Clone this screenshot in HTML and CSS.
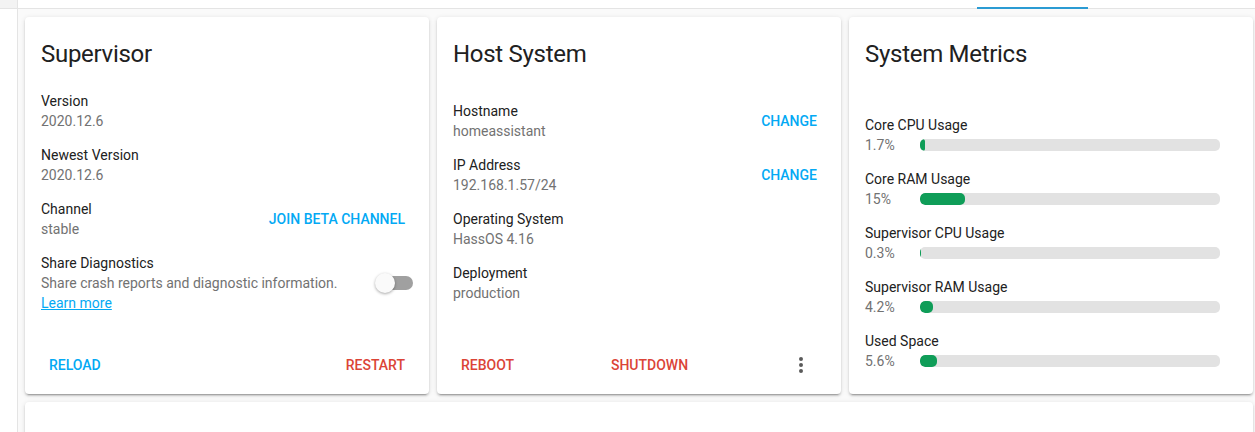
FILE: index.html
```html
<!DOCTYPE html>
<html lang="en">
<head>
    <meta charset="UTF-8">
    <meta name="viewport" content="width=device-width, initial-scale=1.0">
    <title>Supervisor - System</title>
    <link rel="stylesheet" href="styles.css">
</head>
<body>
    <div class="app">
        <aside class="sidebar">
            <div class="sidebar-top"></div>
        </aside>

        <main class="main">
            <div class="tabs">
                <span class="tab-active"></span>
            </div>

            <div class="grid">

                <div class="card">
                    <h1 class="card-header">Supervisor</h1>
                    <div class="card-content">
                        <div class="row">
                            <div>
                                <div class="label">Version</div>
                                <div class="value">2020.12.6</div>
                            </div>
                        </div>
                        <div class="row">
                            <div>
                                <div class="label">Newest Version</div>
                                <div class="value">2020.12.6</div>
                            </div>
                        </div>
                        <div class="row">
                            <div>
                                <div class="label">Channel</div>
                                <div class="value">stable</div>
                            </div>
                            <button class="btn">Join beta channel</button>
                        </div>
                        <div class="row">
                            <div>
                                <div class="label">Share Diagnostics</div>
                                <div class="value">Share crash reports and diagnostic information.</div>
                                <a class="link" href="#">Learn more</a>
                            </div>
                            <div class="switch"><span class="switch-thumb"></span></div>
                        </div>
                    </div>
                    <div class="card-actions">
                        <button class="btn">Reload</button>
                        <button class="btn warn">Restart</button>
                    </div>
                </div>

                <div class="card host">
                    <h1 class="card-header">Host System</h1>
                    <div class="card-content">
                        <div class="row">
                            <div>
                                <div class="label">Hostname</div>
                                <div class="value">homeassistant</div>
                            </div>
                            <button class="btn">Change</button>
                        </div>
                        <div class="row">
                            <div>
                                <div class="label">IP Address</div>
                                <div class="value">192.168.1.57/24</div>
                            </div>
                            <button class="btn">Change</button>
                        </div>
                        <div class="row">
                            <div>
                                <div class="label">Operating System</div>
                                <div class="value">HassOS 4.16</div>
                            </div>
                        </div>
                        <div class="row">
                            <div>
                                <div class="label">Deployment</div>
                                <div class="value">production</div>
                            </div>
                        </div>
                    </div>
                    <div class="card-actions">
                        <button class="btn warn">Reboot</button>
                        <button class="btn warn">Shutdown</button>
                        <button class="icon-btn">
                            <svg viewBox="0 0 24 24" width="24" height="24"><path d="M12,16A2,2 0 0,1 14,18A2,2 0 0,1 12,20A2,2 0 0,1 10,18A2,2 0 0,1 12,16M12,10A2,2 0 0,1 14,12A2,2 0 0,1 12,14A2,2 0 0,1 10,12A2,2 0 0,1 12,10M12,4A2,2 0 0,1 14,6A2,2 0 0,1 12,8A2,2 0 0,1 10,6A2,2 0 0,1 12,4Z"/></svg>
                        </button>
                    </div>
                </div>

                <div class="card metrics">
                    <h1 class="card-header">System Metrics</h1>
                    <div class="card-content">
                        <div class="metric">
                            <div class="label">Core CPU Usage</div>
                            <div class="metric-line">
                                <span class="value pct">1.7%</span>
                                <div class="bar"><div class="bar-fill" style="width:1.7%"></div></div>
                            </div>
                        </div>
                        <div class="metric">
                            <div class="label">Core RAM Usage</div>
                            <div class="metric-line">
                                <span class="value pct">15%</span>
                                <div class="bar"><div class="bar-fill" style="width:15%"></div></div>
                            </div>
                        </div>
                        <div class="metric">
                            <div class="label">Supervisor CPU Usage</div>
                            <div class="metric-line">
                                <span class="value pct">0.3%</span>
                                <div class="bar"><div class="bar-fill" style="width:0.3%"></div></div>
                            </div>
                        </div>
                        <div class="metric">
                            <div class="label">Supervisor RAM Usage</div>
                            <div class="metric-line">
                                <span class="value pct">4.2%</span>
                                <div class="bar"><div class="bar-fill" style="width:4.2%"></div></div>
                            </div>
                        </div>
                        <div class="metric">
                            <div class="label">Used Space</div>
                            <div class="metric-line">
                                <span class="value pct">5.6%</span>
                                <div class="bar"><div class="bar-fill" style="width:5.6%"></div></div>
                            </div>
                        </div>
                    </div>
                </div>

                <div class="card card-wide"></div>

            </div>
        </main>
    </div>
</body>
</html>
```

FILE: styles.css
```css
html, body{
    margin:0px;
    height:100%;
    overflow:hidden;
}
body{
    font-family: Roboto, "Noto Sans", sans-serif;
    font-size:14px;
    background-color:#fafafa;
    color:#212121;
}
.app{
    display:flex;
    height:100%;
}
.sidebar{
    width:17px;
    flex-shrink:0;
    background-color:#ffffff;
    border-right:1px solid #e4e4e4;
}
.sidebar-top{
    height:8px;
    background-color:#f3f3f3;
    border-bottom:1px solid #e4e4e4;
}
.main{
    flex:1;
    display:flex;
    flex-direction:column;
}
.tabs{
    height:8px;
    flex-shrink:0;
    background-color:#ffffff;
    border-bottom:1px solid #e4e4e4;
    display:flex;
    justify-content:flex-end;
    align-items:flex-end;
    padding-right:167px;
}
.tab-active{
    width:111px;
    height:2px;
    margin-bottom:-1px;
    background-color:#2b9bd3;
}
.grid{
    flex-shrink:0;
    display:grid;
    grid-template-columns: repeat(3, 404px);
    gap:8px;
    padding:8px 2px 0 7px;
}
.card{
    background-color:#ffffff;
    border-radius:4px;
    box-shadow: 0 2px 2px 0 rgba(0,0,0,.14), 0 1px 5px 0 rgba(0,0,0,.12), 0 3px 1px -2px rgba(0,0,0,.2);
    display:flex;
    flex-direction:column;
}
.card-wide{
    grid-column: 1 / 4;
    height:80px;
}
.card-header{
    margin:0px;
    padding:21px 16px 0;
    font-size:24px;
    font-weight:400;
    line-height:32px;
    letter-spacing:-0.012em;
    color:#212121;
}
.card-content{
    flex:1;
    padding:14px 16px 16px;
}
.host .card-content{
    padding-top:24px;
}
.metrics .card-content{
    padding-top:38px;
}
.row{
    display:flex;
    justify-content:space-between;
    align-items:center;
    padding:7px 0;
}
.label{
    line-height:20px;
    color:#212121;
}
.value{
    line-height:20px;
    color:#727272;
}
.link{
    color:#03a9f4;
    line-height:20px;
}
.btn{
    font-family: Roboto, sans-serif;
    font-size:14px;
    font-weight:500;
    letter-spacing:0px;
    text-transform:uppercase;
    color:#03a9f4;
    background:none;
    border:0px;
    height:36px;
    padding:0 8px;
    cursor:pointer;
}
.btn.warn{
    color:#db4437;
}
.card-actions{
    display:flex;
    justify-content:space-between;
    align-items:center;
    min-height:48px;
    padding:5px 16px;
}
.icon-btn{
    width:48px;
    height:48px;
    border:0px;
    border-radius:50%;
    background:none;
    padding:12px;
    cursor:pointer;
}
.icon-btn svg{
    display:block;
    fill:#5a5a5a;
}
.switch{
    width:36px;
    height:14px;
    border-radius:7px;
    background-color:#a0a0a0;
    display:flex;
    align-items:center;
}
.switch-thumb{
    width:20px;
    height:20px;
    border-radius:50%;
    background-color:#fafafa;
    margin-left:-2px;
    box-shadow: 0 1px 3px rgba(0,0,0,.35);
}
.metric{
    padding:7px 0;
}
.metric-line{
    display:flex;
    align-items:center;
}
.pct{
    width:55px;
    flex-shrink:0;
}
.bar{
    flex:1;
    height:12px;
    margin-right:17px;
    border-radius:5px;
    background-color:#e2e2e2;
    overflow:hidden;
}
.bar-fill{
    height:100%;
    border-radius:5px;
    background-color:#0f9d58;
}
```
